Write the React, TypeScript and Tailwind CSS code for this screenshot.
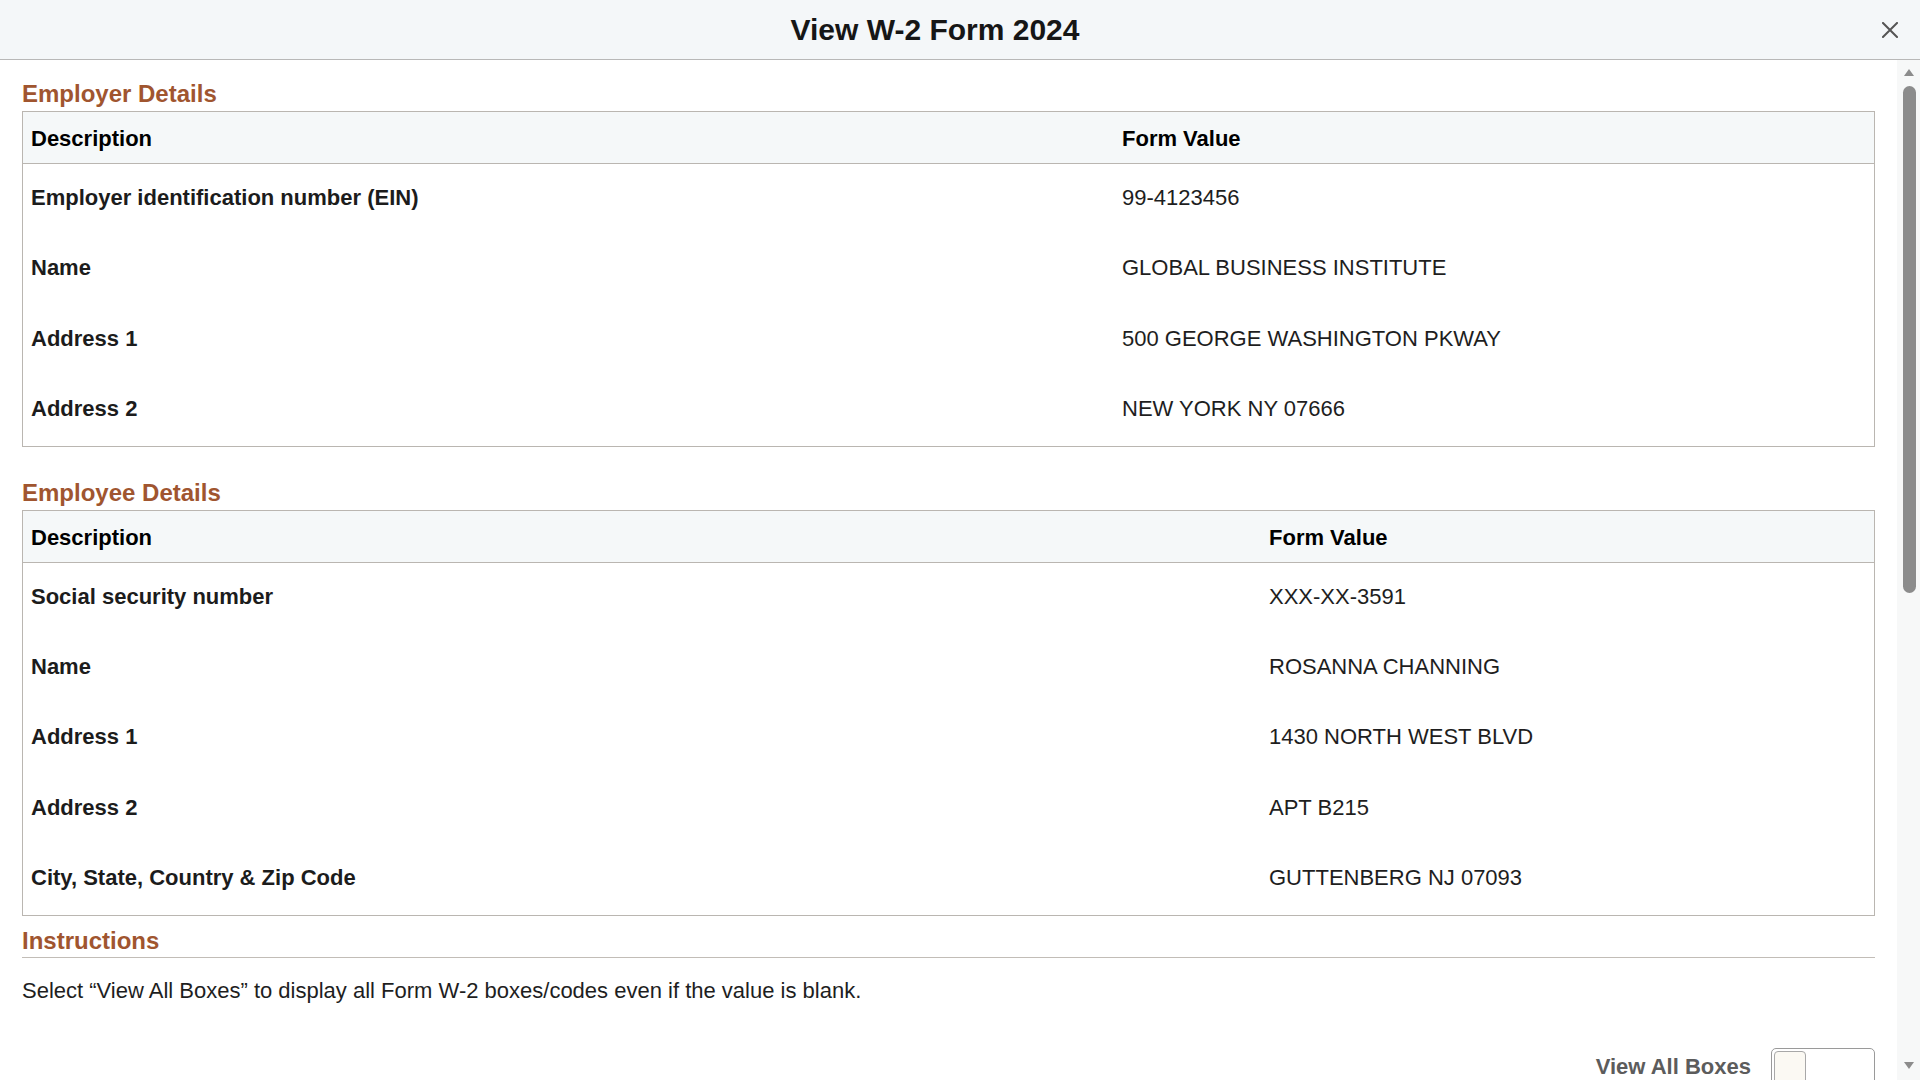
import React from "react";

type Row = { label: string; value: string };

const employerRows: Row[] = [
  { label: "Employer identification number (EIN)", value: "99-4123456" },
  { label: "Name", value: "GLOBAL BUSINESS INSTITUTE" },
  { label: "Address 1", value: "500 GEORGE WASHINGTON PKWAY" },
  { label: "Address 2", value: "NEW YORK NY 07666" },
];

const employeeRows: Row[] = [
  { label: "Social security number", value: "XXX-XX-3591" },
  { label: "Name", value: "ROSANNA CHANNING" },
  { label: "Address 1", value: "1430 NORTH WEST BLVD" },
  { label: "Address 2", value: "APT B215" },
  { label: "City, State, Country & Zip Code", value: "GUTTENBERG NJ 07093" },
];

const SectionTitle = ({ children }: { children: React.ReactNode }) => (
  <h2 className="text-[24px] leading-[28px] font-bold text-[#a0552f]">{children}</h2>
);

const DetailsTable = ({ rows, firstCol }: { rows: Row[]; firstCol: string }) => (
  <div className="border border-[#bab6b1]">
    {/* header */}
    <div className="flex h-[52px] bg-[#f5f8f9] border-b border-[#bab6b1] text-[22px] leading-[26px] font-bold text-black">
      <div className={`${firstCol} shrink-0 pl-[8px] pt-[14px]`}>Description</div>
      <div className="flex-1 pl-[9px] pt-[14px]">Form Value</div>
    </div>
    {rows.map((row, i) => (
      <div key={i} className="flex h-[70.4px] text-[22px] leading-[26px]">
        <div className={`${firstCol} shrink-0 pl-[8px] pt-[21px] font-bold text-[#1c1c1c]`}>{row.label}</div>
        <div className="flex-1 pl-[9px] pt-[21px] text-[#1e1e1e]">{row.value}</div>
      </div>
    ))}
  </div>
);

const Scrollbar = () => (
  <div className="w-[23px] shrink-0 bg-[#f7f8f8] flex flex-col items-center">
    <svg width="10" height="8" viewBox="0 0 10 8" className="mt-[9px] ml-[1px]">
      <path d="M5 0 L10 7 L0 7 Z" fill="#8c8c8c" />
    </svg>
    <div className="mt-[9px] ml-[1px] w-[13px] h-[507px] rounded-full bg-[#8c8c8c]" />
    <div className="flex-1" />
    <svg width="10" height="8" viewBox="0 0 10 8" className="mb-[10px] ml-[1px]">
      <path d="M0 0 L10 0 L5 7 Z" fill="#8c8c8c" />
    </svg>
  </div>
);

export default function App() {
  return (
    <div
      className="w-full h-screen flex flex-col bg-white overflow-hidden"
      style={{ fontFamily: '"Liberation Sans", Arial, sans-serif' }}
    >
      {/* modal header */}
      <div className="relative h-[60px] shrink-0 bg-[#f4f7f9] border-b border-[#b8b8b8] flex justify-center pr-[50px]">
        <h1 className="pt-[13px] text-[30px] leading-[34px] font-bold text-[#161616]">View W-2 Form 2024</h1>
        <button className="absolute right-[22px] top-[22px] w-[16px] h-[16px]" aria-label="Close">
          <svg width="16" height="16" viewBox="0 0 16 16">
            <path d="M1 1 L15 15 M15 1 L1 15" stroke="#555" strokeWidth="2" strokeLinecap="square" />
          </svg>
        </button>
      </div>

      <div className="flex flex-1 min-h-0">
        <div className="flex-1 min-w-0 px-[22px] overflow-hidden">
          <div className="mt-[20px] mb-[3px]">
            <SectionTitle>Employer Details</SectionTitle>
          </div>
          <DetailsTable rows={employerRows} firstCol="w-[1090px]" />

          <div className="mt-[32px] mb-[3px]">
            <SectionTitle>Employee Details</SectionTitle>
          </div>
          <DetailsTable rows={employeeRows} firstCol="w-[1237px]" />

          <div className="mt-[11px] pb-[2px] border-b border-[#c2bdb7]">
            <SectionTitle>Instructions</SectionTitle>
          </div>
          <p className="mt-[20px] text-[22px] leading-[26px] text-[#1e1e1e]">
            Select “View All Boxes” to display all Form W-2 boxes/codes even if the value is blank.
          </p>

          <div className="mt-[44px] flex justify-end items-start gap-[20px]">
            <span className="mt-[6px] text-[22px] leading-[26px] font-bold text-[#5c5c5c]">View All Boxes</span>
            <div className="relative w-[104px] h-[40px] border border-[#9a9a9a] rounded-[5px] bg-white">
              <div className="absolute left-[2px] top-[2px] w-[32px] h-[36px] bg-[#fbf9f3] border border-[#a8a8a8] rounded-[4px]" />
            </div>
          </div>
        </div>
        <Scrollbar />
      </div>
    </div>
  );
}
